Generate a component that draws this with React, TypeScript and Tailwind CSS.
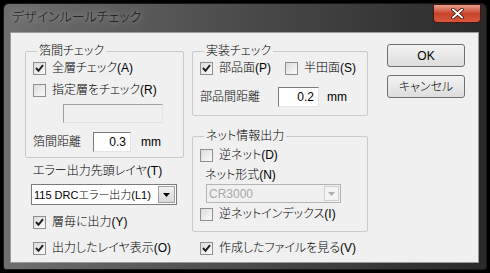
import React from 'react';

const FONT = "font-['Liberation_Sans','Noto_Sans_CJK_JP',sans-serif] [font-feature-settings:'palt'] font-light";

const CheckBox = ({ checked, label, className = '' }: { checked?: boolean; label: string; className?: string }) => (
  <div className={`flex items-center h-[16px] ${className}`}>
    <span className="w-[13px] h-[13px] border border-[#8e8f8f] bg-gradient-to-br from-[#dcdcdc] to-[#fbfbfb] flex items-center justify-center shrink-0">
      {checked && (
        <svg width="9" height="9" viewBox="0 0 9 9">
          <path d="M1 4 L3.5 6.8 L8 1.2" stroke="#1e1e1e" strokeWidth="2" fill="none" />
        </svg>
      )}
    </span>
    <span className="ml-[6px] text-[12px] leading-[16px] text-black whitespace-nowrap">{label}</span>
  </div>
);

const Input = ({ value, className = '' }: { value: string; className?: string }) => (
  <div
    className={`h-[20px] bg-white border border-t-[#7a7a7a] border-l-[#7a7a7a] border-r-[#e3e3e3] border-b-[#e3e3e3] text-right pr-[4px] text-[12px] leading-[18px] text-black ${className}`}
  >
    {value}
  </div>
);

const Group = ({ title, className = '', children }: { title: string; className?: string; children: React.ReactNode }) => (
  <fieldset className={`border border-[#c9c9c9] rounded-[2px] px-[7px] ${className}`}>
    <legend className="ml-[4px] px-[2px] text-[12px] leading-[16px] text-black">{title}</legend>
    {children}
  </fieldset>
);

export default function App() {
  return (
    <div className={`w-[490px] h-[273px] bg-black overflow-hidden ${FONT}`}>
      <div className="ml-[3px] mt-[3px] w-[484px] h-[267px] rounded-t-[6px] rounded-b-[3px] bg-gradient-to-r from-[#6f6f6f] via-[#4a4a4a] to-[#2a2a2a] border border-[#1a1a1a] flex flex-col">
        {/* title bar */}
        <div className="h-[28px] flex items-start justify-between">
          <div className="pl-[8px] pt-[5px] text-[13px] leading-[16px] text-[#151515] [text-shadow:0_0_6px_#c8c8c8]">
            デザインルールチェック
          </div>
          <div className="mr-[5px] w-[48px] h-[19px] rounded-b-[4px] border border-[#4a1510] bg-gradient-to-b from-[#e8a08e] via-[#c7432b] to-[#d9573a] flex items-center justify-center">
            <svg width="13" height="11" viewBox="0 0 13 11">
              <path d="M2 1.5 L11 9.5 M11 1.5 L2 9.5" stroke="#3a0d06" strokeWidth="3.6" strokeLinecap="round" />
              <path d="M2 1.5 L11 9.5 M11 1.5 L2 9.5" stroke="#ffffff" strokeWidth="2" strokeLinecap="round" />
            </svg>
          </div>
        </div>

        {/* client */}
        <div className="ml-[6px] w-[469px] h-[231px] bg-[#f0f0f0] border border-[#9a9a9a] pl-[14px] pt-[10px] text-[12px] text-black">
          <div className="flex items-start">
            {/* left column */}
            <div className="w-[159px] flex flex-col">
              <Group title="箔間チェック" className="pb-[5px]">
                <CheckBox checked label="全層チェック(A)" className="mt-[1px]" />
                <CheckBox label="指定層をチェック(R)" className="mt-[6px]" />
                <div className="ml-[30px] mt-[6px] w-[100px] h-[19px] bg-[#f0f0f0] border border-t-[#a0a0a0] border-l-[#a0a0a0] border-r-[#e3e3e3] border-b-[#e3e3e3]" />
                <div className="mt-[9px] flex items-center">
                  <span className="w-[60px] leading-[16px]">箔間距離</span>
                  <Input value="0.3" className="w-[38px]" />
                  <span className="ml-[10px]">mm</span>
                </div>
              </Group>
              <div className="mt-[5px] pl-[8px] leading-[16px]">エラー出力先頭レイヤ(T)</div>
              <div className="ml-[6px] mt-[5px] w-[146px] h-[21px] bg-white border border-[#7a7a7a] flex items-center">
                <span className="flex-1 pl-[2px] text-[11px] leading-[16px] whitespace-nowrap overflow-hidden">115 DRCエラー出力(L1)</span>
                <span className="w-[17px] h-[17px] mr-[1px] bg-gradient-to-b from-[#f2f2f2] to-[#d8d8d8] border border-[#a0a0a0] flex items-center justify-center shrink-0">
                  <svg width="7" height="4" viewBox="0 0 7 4">
                    <path d="M0 0 L7 0 L3.5 4 Z" fill="#000" />
                  </svg>
                </span>
              </div>
              <CheckBox checked label="層毎に出力(Y)" className="ml-[8px] mt-[9px]" />
            </div>

            {/* middle column */}
            <div className="ml-[8px] w-[176px] flex flex-col">
              <Group title="実装チェック" className="pb-[8px]">
                <div className="mt-[1px] flex">
                  <CheckBox checked label="部品面(P)" className="w-[85px]" />
                  <CheckBox label="半田面(S)" />
                </div>
                <div className="mt-[11px] flex items-center">
                  <span className="w-[78px] leading-[16px]">部品間距離</span>
                  <Input value="0.2" className="w-[41px]" />
                  <span className="ml-[8px]">mm</span>
                </div>
              </Group>
              <Group title="ネット情報出力" className="mt-[12px] pb-[9px]">
                <CheckBox label="逆ネット(D)" className="mt-[3px]" />
                <div className="mt-[4px] ml-[5px] leading-[16px]">ネット形式(N)</div>
                <div className="ml-[6px] mt-[1px] w-[135px] h-[19px] bg-[#f0f0f0] border border-[#b4b4b4] flex items-center">
                  <span className="flex-1 pl-[2px] leading-[16px] text-[#a8a8a8]">CR3000</span>
                  <span className="w-[15px] h-[15px] mr-[1px] bg-[#f4f4f4] border border-[#d0d0d0] flex items-center justify-center">
                    <svg width="7" height="4" viewBox="0 0 7 4">
                      <path d="M0 0 L7 0 L3.5 4 Z" fill="#b0b0b0" />
                    </svg>
                  </span>
                </div>
                <CheckBox label="逆ネットインデックス(I)" className="mt-[3px]" />
              </Group>
            </div>

            {/* buttons */}
            <div className="ml-[19px] flex flex-col">
              <button className="mt-[1px] w-[78px] h-[23px] rounded-[3px] border border-[#707070] bg-gradient-to-b from-[#f2f2f2] to-[#dddddd] text-[12px] leading-[16px]">
                OK
              </button>
              <button className="mt-[8px] w-[78px] h-[23px] rounded-[3px] border border-[#707070] bg-gradient-to-b from-[#f2f2f2] to-[#dddddd] text-[12px] leading-[16px]">
                キャンセル
              </button>
            </div>
          </div>

          <div className="mt-[8px] flex">
            <CheckBox checked label="出力したレイヤ表示(O)" className="ml-[8px] w-[167px]" />
            <CheckBox checked label="作成したファイルを見る(V)" />
          </div>
        </div>
      </div>
    </div>
  );
}
